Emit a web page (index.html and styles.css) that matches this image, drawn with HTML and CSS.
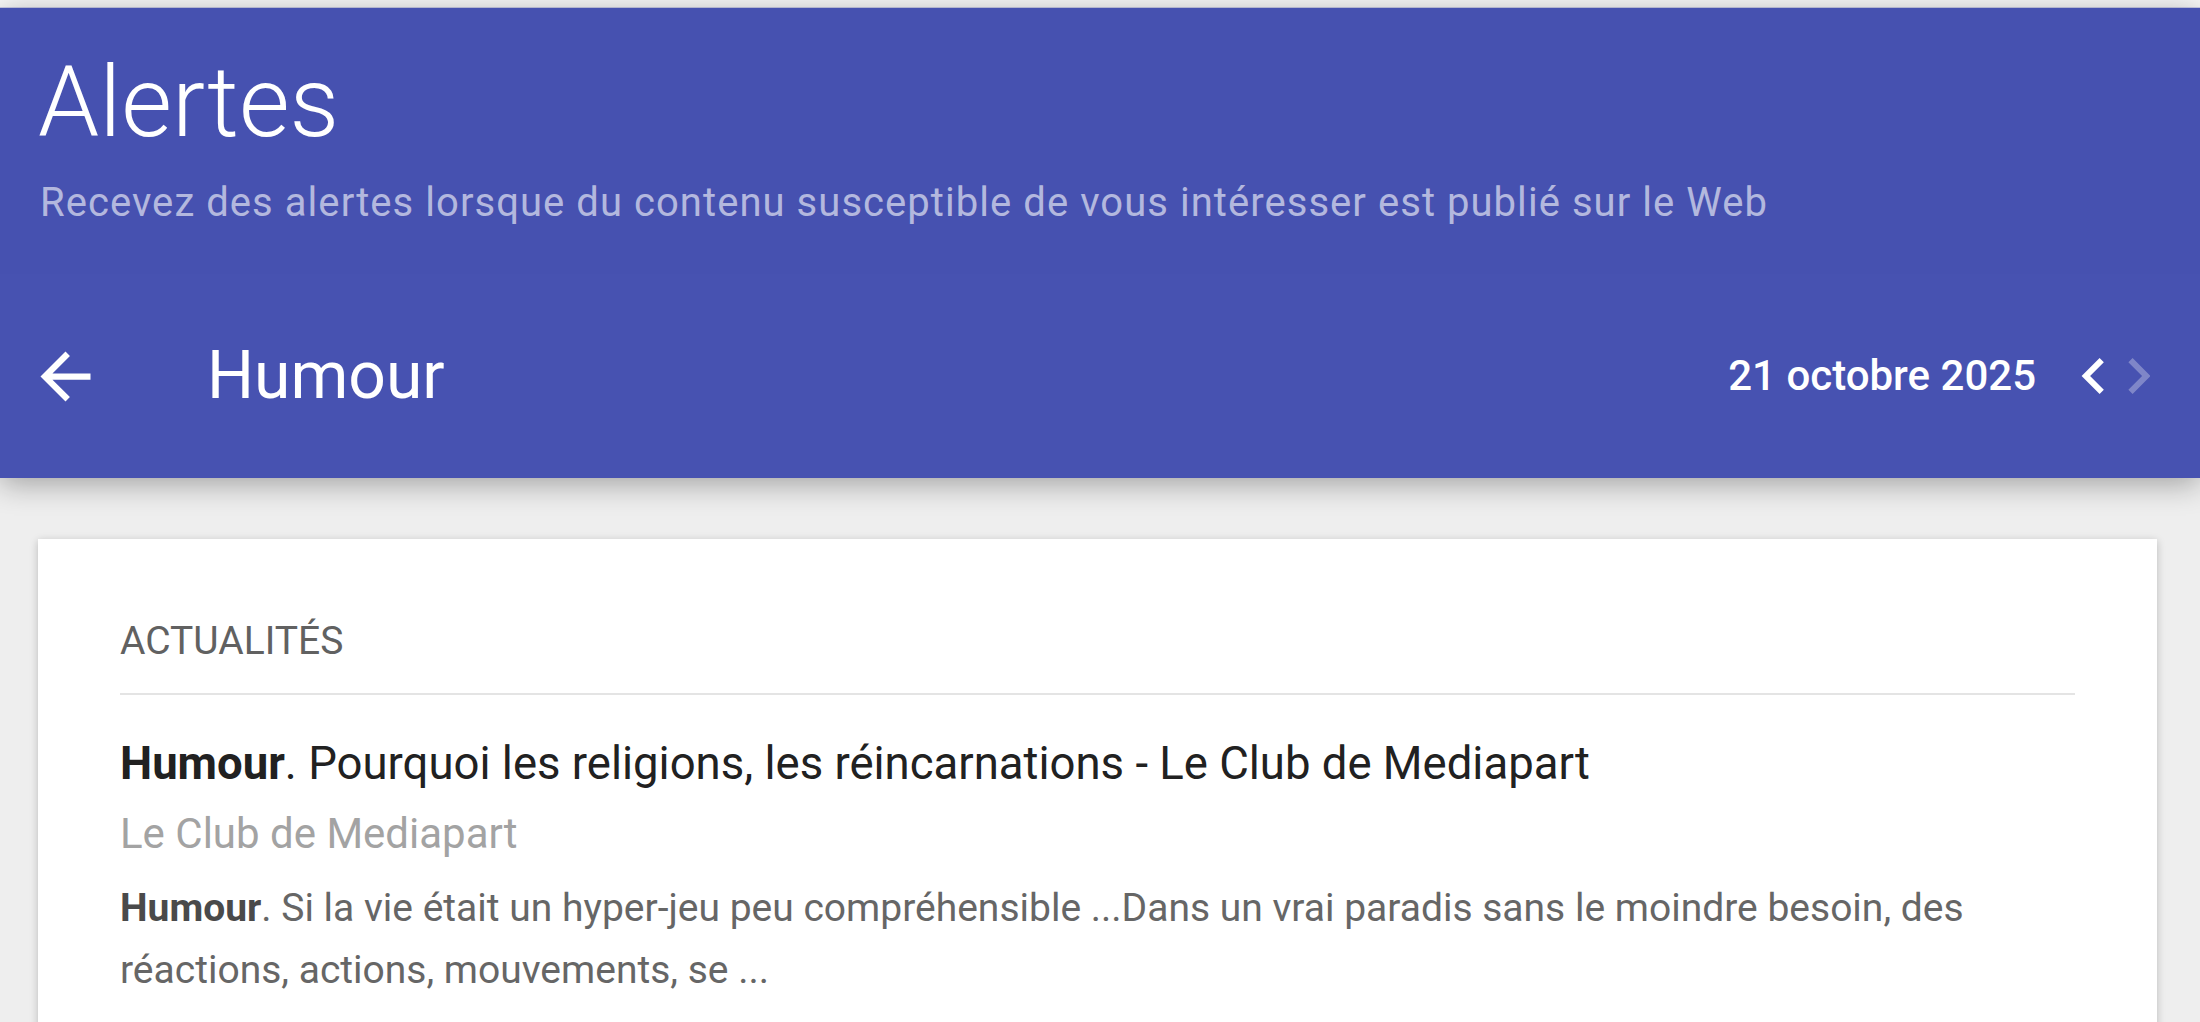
FILE: index.html
```html
<!DOCTYPE html>
<html lang="fr">
<head>
<meta charset="utf-8">
<title>Alertes</title>
<link rel="stylesheet" href="styles.css">
</head>
<body>
<div class="top-strip"></div>
<header class="appbar">
  <div class="hero">
    <h1 class="hero-title">Alertes</h1>
    <p class="hero-sub">Recevez des alertes lorsque du contenu susceptible de vous intéresser est publié sur le Web</p>
  </div>
  <div class="toolbar">
    <button class="icon-btn back" aria-label="Retour">
      <svg width="75" height="75" viewBox="0 0 24 24"><path fill="#fff" d="M20 11H7.83l5.59-5.59L12 4l-8 8 8 8 1.41-1.41L7.83 13H20v-2z"/></svg>
    </button>
    <h2 class="toolbar-title">Humour</h2>
    <div class="spacer"></div>
    <span class="date">21 octobre 2025</span>
    <div class="nav">
      <svg class="chev" width="24" height="36" viewBox="7.8 6 8 12"><path fill="#fff" d="M15.41 7.41L14 6l-6 6 6 6 1.41-1.41L10.83 12z"/></svg>
      <svg class="chev disabled" width="24" height="36" viewBox="7.8 6 8 12"><path fill="#fff" d="M10 6L8.59 7.41 13.17 12l-4.58 4.59L10 18l6-6z"/></svg>
    </div>
  </div>
</header>
<main class="content">
  <section class="card">
    <h3 class="section-label">ACTUALITÉS</h3>
    <article class="result">
      <div class="result-title"><b>Humour</b>. Pourquoi les religions, les réincarnations - Le Club de Mediapart</div>
      <div class="result-source">Le Club de Mediapart</div>
      <div class="result-snippet"><b>Humour</b>. Si la vie était un hyper-jeu peu compréhensible ...Dans un vrai paradis sans le moindre besoin, des réactions, actions, mouvements, se ...</div>
    </article>
  </section>
</main>
</body>
</html>
```
FILE: styles.css
```css
* { box-sizing: border-box; }
html, body {
  margin: 0;
  padding: 0;
}
body {
  background: #eeeeee;
  font-family: Roboto, "Liberation Sans", Arial, sans-serif;
  height: 1022px;
  overflow: hidden;
}
.top-strip {
  height: 8px;
  background: #f6f6f6;
  border-bottom: 1px solid #c9cbe6;
}
.appbar {
  background: #4752b1;
  color: #fff;
  box-shadow: 0 6px 28px rgba(0, 0, 0, 0.32);
  position: relative;
  z-index: 1;
}
.hero {
  height: 266px;
  padding: 46px 40px 0 38px;
  background: #4651b0;
}
.hero-title {
  margin: 0;
  font-weight: 300;
  font-size: 98px;
  line-height: 98px;
}
.hero-sub {
  margin: 31px 0 0 2px;
  font-size: 40px;
  line-height: 40px;
  letter-spacing: 1.05px;
  color: rgba(255, 255, 255, 0.6);
}
.toolbar {
  height: 204px;
  display: flex;
  align-items: center;
  padding: 0 50px 0 28px;
}
.icon-btn {
  background: none;
  border: 0;
  padding: 0;
  display: flex;
  cursor: pointer;
}
.toolbar-title {
  margin: 0 0 0 104px;
  font-weight: 400;
  font-size: 66px;
  line-height: 66px;
}
.spacer { flex: 1; }
.date {
  font-weight: 500;
  font-size: 42px;
  line-height: 42px;
}
.nav {
  display: flex;
  gap: 21px;
  margin-left: 45px;
}
.chev.disabled { opacity: 0.3; }
.content {
  padding: 61px 43px 0 38px;
}
.card {
  background: #fff;
  box-shadow: 0 2px 8px rgba(0, 0, 0, 0.22);
  padding: 83px 82px 40px;
  min-height: 600px;
}
.section-label {
  margin: 0;
  font-weight: 400;
  font-size: 39px;
  line-height: 39px;
  color: #616161;
  padding-bottom: 32px;
  border-bottom: 2px solid #e4e4e4;
}
.result-title {
  margin-top: 46px;
  font-size: 45.5px;
  line-height: 45.5px;
  color: #212121;
}
.result-title b { font-weight: 700; }
.result-source {
  margin-top: 26px;
  font-size: 42px;
  line-height: 42px;
  color: #a3a3a3;
}
.result-snippet {
  margin-top: 22px;
  font-size: 39px;
  line-height: 62px;
  color: #666666;
}
.result-snippet b {
  font-weight: 700;
  color: #4a4a4a;
}
```
